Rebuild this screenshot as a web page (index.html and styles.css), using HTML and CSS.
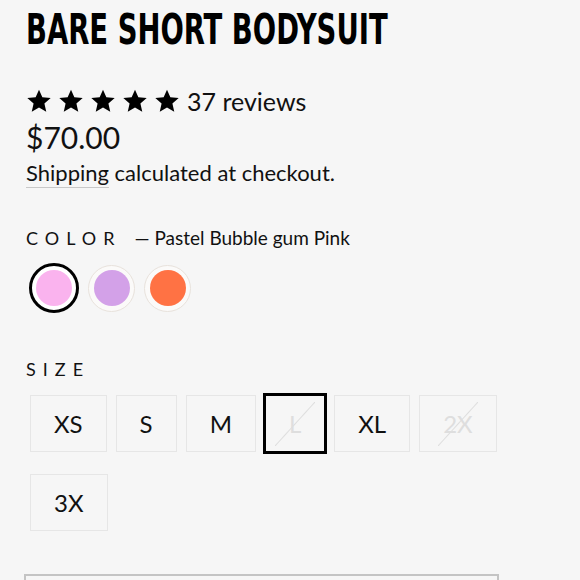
FILE: index.html
```html
<!DOCTYPE html>
<html lang="en">
<head>
  <meta charset="UTF-8">
  <meta name="viewport" content="width=device-width, initial-scale=1.0">
  <title>Bare Short Bodysuit</title>
  <link rel="stylesheet" href="styles.css">
</head>
<body>
  <!-- Product Info -->
  <div class="product">
    <h1 class="product-title">BARE SHORT BODYSUIT</h1>

    <div class="rating">
      <div class="stars">
        <svg viewBox="0 0 24 24"><path d="M12 1.5l3.1 7.1 7.7.7-5.8 5.1 1.7 7.6L12 18l-6.7 4 1.7-7.6-5.8-5.1 7.7-.7z"/></svg>
        <svg viewBox="0 0 24 24"><path d="M12 1.5l3.1 7.1 7.7.7-5.8 5.1 1.7 7.6L12 18l-6.7 4 1.7-7.6-5.8-5.1 7.7-.7z"/></svg>
        <svg viewBox="0 0 24 24"><path d="M12 1.5l3.1 7.1 7.7.7-5.8 5.1 1.7 7.6L12 18l-6.7 4 1.7-7.6-5.8-5.1 7.7-.7z"/></svg>
        <svg viewBox="0 0 24 24"><path d="M12 1.5l3.1 7.1 7.7.7-5.8 5.1 1.7 7.6L12 18l-6.7 4 1.7-7.6-5.8-5.1 7.7-.7z"/></svg>
        <svg viewBox="0 0 24 24"><path d="M12 1.5l3.1 7.1 7.7.7-5.8 5.1 1.7 7.6L12 18l-6.7 4 1.7-7.6-5.8-5.1 7.7-.7z"/></svg>
      </div>
      <span class="review-count">37 reviews</span>
    </div>

    <div class="price">$70.00</div>
    <p class="shipping"><a href="#">Shipping</a> calculated at checkout.</p>

    <!-- Color Picker -->
    <div class="option-label">
      <span class="option-name">COLOR</span>
      <span class="option-value">— Pastel Bubble gum Pink</span>
    </div>
    <div class="swatches">
      <button class="swatch selected"><span class="swatch-color pink"></span></button>
      <button class="swatch"><span class="swatch-color lilac"></span></button>
      <button class="swatch"><span class="swatch-color orange"></span></button>
    </div>

    <!-- Size Picker -->
    <div class="option-label size-label">
      <span class="option-name">SIZE</span>
    </div>
    <div class="sizes">
      <button class="size-btn">XS</button>
      <button class="size-btn">S</button>
      <button class="size-btn">M</button>
      <button class="size-btn selected sold-out"><span>L</span></button>
      <button class="size-btn">XL</button>
      <button class="size-btn sold-out"><span>2X</span></button>
      <button class="size-btn">3X</button>
    </div>

    <div class="add-box"></div>
  </div>
</body>
</html>
```

FILE: styles.css
```css
/* Base Styling */
* {
  margin: 0;
  padding: 0;
  box-sizing: border-box;
}

body {
  font-family: Lato, "Open Sans", sans-serif;
  background-color: #f6f6f6;
  color: #111;
  overflow: hidden;
}

.product {
  padding: 0 26px;
}

/* Title - no condensed face installed, so squeeze the bold one */
.product-title {
  font-family: "DejaVu Sans", sans-serif;
  font-stretch: condensed;
  font-weight: 700;
  font-size: 43px;
  line-height: 1;
  margin-top: 8px;
  color: #000;
  white-space: nowrap;
  transform: scaleX(0.71);
  transform-origin: left center;
}

/* Rating */
.rating {
  display: flex;
  align-items: center;
  margin-top: 38px;
  height: 24px;
}

.stars {
  display: flex;
  gap: 6px;
}

.stars svg {
  width: 26px;
  height: 26px;
  fill: #000;
}

.review-count {
  font-size: 25px;
  line-height: 24px;
  margin-left: 7px;
}

/* Price */
.price {
  font-size: 30px;
  line-height: 34px;
  margin-top: 7px;
}

.shipping {
  font-size: 22px;
  line-height: 28px;
  margin-top: 5px;
}

.shipping a {
  color: inherit;
  text-decoration: none;
  border-bottom: 1px solid #c8c8c8;
  padding-bottom: 1px;
}

/* Option Labels */
.option-label {
  font-size: 18px;
  line-height: 22px;
  margin-top: 40px;
  display: flex;
  gap: 13px;
}

.option-name {
  letter-spacing: 7px;
}

.option-value {
  font-size: 19px;
}

.size-label {
  margin-top: 45px;
}

/* Swatches */
.swatches {
  display: flex;
  align-items: center;
  gap: 9px;
  margin: 14px 0 0 3px;
}

.swatch {
  width: 47px;
  height: 47px;
  border-radius: 50%;
  border: 1px solid #e8e2dc;
  background-color: #fbfaf9;
  display: flex;
  align-items: center;
  justify-content: center;
  cursor: pointer;
}

.swatch.selected {
  width: 50px;
  height: 50px;
  border: 3px solid #000;
  background-color: #fff;
}

.swatch-color {
  width: 36px;
  height: 36px;
  border-radius: 50%;
}

.swatch-color.pink { background-color: #fab3ee; }
.swatch-color.lilac { background-color: #d3a1e8; }
.swatch-color.orange { background-color: #ff7244; }

/* Sizes */
.sizes {
  display: flex;
  flex-wrap: wrap;
  align-items: center;
  gap: 20px 9px;
  margin: 13px 0 0 4px;
  max-width: 480px;
}

.size-btn {
  font-family: Lato, sans-serif;
  font-size: 24px;
  line-height: 55px;
  padding: 0 23px;
  min-width: 60px;
  border: 1px solid #e6e6e6;
  background-color: #f6f6f6;
  color: #111;
  cursor: pointer;
}

.size-btn.selected {
  border: 3px solid #000;
  margin: 0 -2px;
}

.size-btn.sold-out {
  color: #dedede;
}

.size-btn.sold-out span {
  position: relative;
  display: inline-block;
}

.size-btn.sold-out span::after {
  content: '';
  position: absolute;
  left: 50%;
  top: 50%;
  width: 40px;
  height: 44px;
  transform: translate(-50%, -50%);
  background: linear-gradient(to bottom right, transparent calc(50% - 1px), #dedede, transparent calc(50% + 1px));
}

/* Add to cart box (cut off) */
.add-box {
  margin: 43px 0 0 -2px;
  width: 475px;
  height: 60px;
  border: 2px solid #c4c4c4;
}
```
